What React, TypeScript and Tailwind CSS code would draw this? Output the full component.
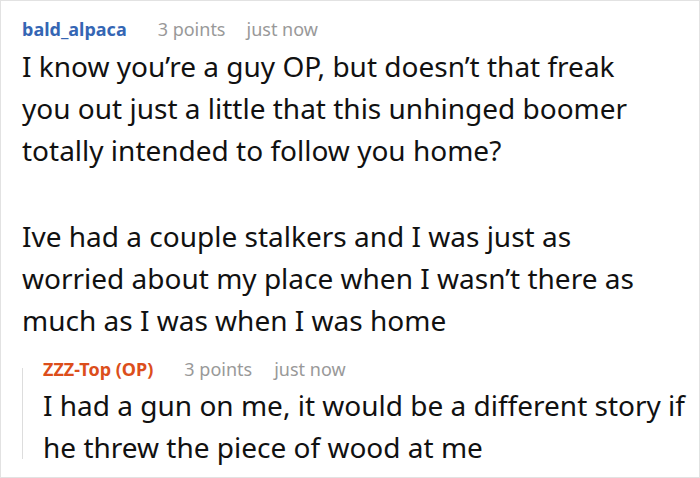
import React from "react";

export default function App() {
  return (
    <div
      className="w-[700px] h-[478px] bg-white border border-[#e2e2e2] overflow-hidden"
      style={{ fontFamily: '"Noto Sans", "Open Sans", sans-serif' }}
    >
      <div className="pl-[21px] pt-[15px]">
        <div className="flex items-baseline text-[18px] leading-[26px]">
          <span className="font-bold text-[#3566b4]">bald_alpaca</span>
          <span className="ml-[31px] text-[#999999]">3 points</span>
          <span className="ml-[21px] text-[#999999]">just now</span>
        </div>
        <div className="w-[640px] text-[28px] leading-[42px] text-[#111111] mt-[3px]">
          <p>I know you’re a guy OP, but doesn’t that freak you out just a little that this unhinged boomer totally intended to follow you home?</p>
          <p className="mt-[44px]">Ive had a couple stalkers and I was just as worried about my place when I wasn’t there as much as I was when I was home</p>
        </div>
        <div className="mt-[15px] flex">
          <div className="w-px bg-[#dddddd] mt-[12px] mb-[9px] shrink-0" />
          <div className="pl-[20px]">
            <div className="flex items-baseline text-[18px] leading-[26px]">
              <span className="font-bold text-[#dc4e1b]">ZZZ-Top (OP)</span>
              <span className="ml-[31px] text-[#999999]">3 points</span>
              <span className="ml-[22px] text-[#999999]">just now</span>
            </div>
            <div className="w-[650px] text-[28px] leading-[42px] text-[#111111] mt-[2px]">
              <p>I had a gun on me, it would be a different story if he threw the piece of wood at me</p>
            </div>
          </div>
        </div>
      </div>
    </div>
  );
}
